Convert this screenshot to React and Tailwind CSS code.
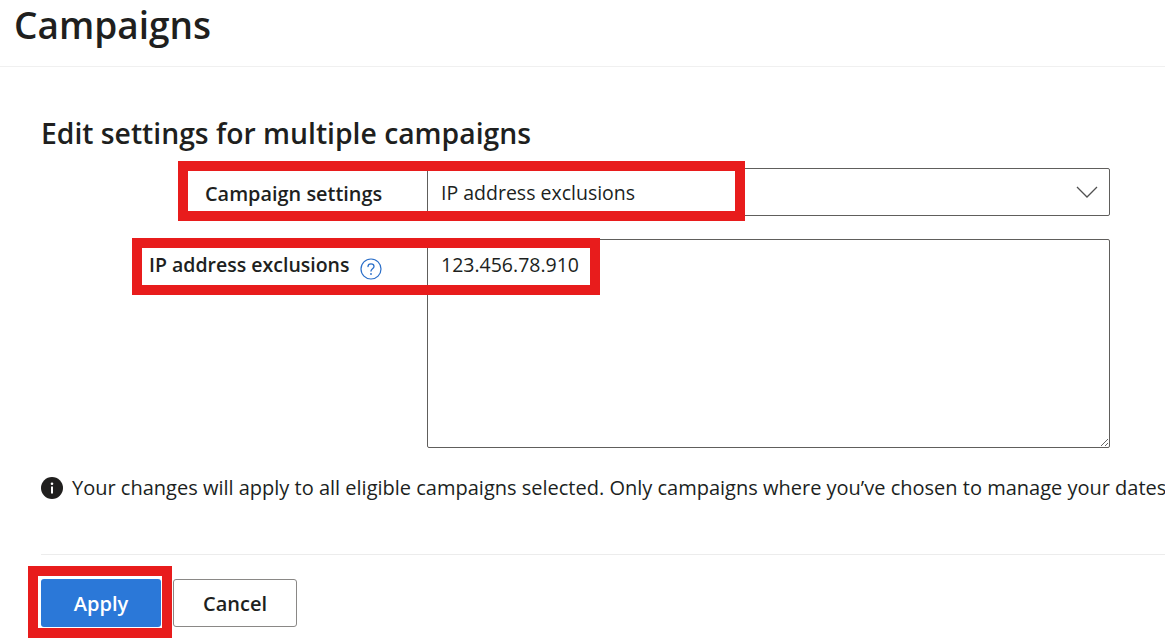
import React from 'react';

const font = { fontFamily: '"Open Sans", "Noto Sans", sans-serif' };

function HelpIcon() {
  return (
    <svg width="22" height="22" viewBox="0 0 22 22" fill="none" className="shrink-0 mt-[8px]">
      <circle cx="11" cy="11" r="10" stroke="#2b6fc9" strokeWidth="1.2" />
      <path d="M8 8.6c0-1.7 1.3-2.7 3-2.7s3 1 3 2.5c0 2.3-3 2.3-3 4.6" stroke="#2b6fc9" strokeWidth="1.3" strokeLinecap="round" />
      <circle cx="11" cy="16" r="0.9" fill="#2b6fc9" />
    </svg>
  );
}

function InfoIcon() {
  return (
    <svg width="22" height="22" viewBox="0 0 22 22" className="shrink-0">
      <circle cx="11" cy="11" r="11" fill="#201f1e" />
      <rect x="10" y="9.5" width="2" height="7" fill="#fff" />
      <circle cx="11" cy="6.8" r="1.3" fill="#fff" />
    </svg>
  );
}

function Highlight({ className }) {
  return <div className={`absolute border-[10px] border-[#e81c1c] pointer-events-none ${className}`} />;
}

export default function App() {
  return (
    <div className="relative w-[1165px] h-[639px] overflow-hidden bg-white text-[#201f1e]" style={font}>
      <header className="h-[67px] border-b border-[#f0f0f0] pl-[14px]">
        <h1 className="text-[37px] leading-[50px] font-semibold">Campaigns</h1>
      </header>

      <main className="pl-[41px]">
        <h2 className="mt-[46px] text-[28.3px] leading-[40px] font-semibold">Edit settings for multiple campaigns</h2>

        <div className="mt-[15px] flex items-center">
          <div className="w-[386px] pl-[164px] pt-1 text-[19.9px] font-semibold">Campaign settings</div>
          <div className="w-[683px] h-[48px] flex items-center justify-between border border-[#605e5c] rounded-[2px] pl-[13px] pr-[11px] pb-px text-[19.5px]">
            <span className="translate-y-px">IP address exclusions</span>
            <svg width="22" height="12" viewBox="0 0 22 12" fill="none">
              <path d="M1 1l10 10L21 1" stroke="#505050" strokeWidth="1.3" />
            </svg>
          </div>
        </div>

        <div className="mt-[23px] flex items-start">
          <div className="w-[386px] pl-[108px] pt-[11px] flex items-start gap-[10px] text-[19.5px] font-semibold">
            <span>IP address exclusions</span>
            <HelpIcon />
          </div>
          <div className="w-[683px] h-[209px] resize overflow-auto border border-[#605e5c] rounded-[2px] pl-[13px] pt-[10px] text-[19.5px]">
            123.456.78.910
          </div>
        </div>

        <div className="mt-[25px] flex items-center gap-[9px] whitespace-nowrap text-[20px]">
          <InfoIcon />
          <span>Your changes will apply to all eligible campaigns selected. Only campaigns where you’ve chosen to manage your dates</span>
        </div>

        <div className="mt-[51px] border-t border-[#ececec] pt-[24px] flex gap-[12px]">
          <button className="w-[120px] h-[48px] pt-px rounded-[3px] bg-[#2b78d8] text-white text-[20px] font-semibold">Apply</button>
          <button className="w-[124px] h-[48px] pt-px rounded-[3px] border border-[#8a8886] text-[20px] font-semibold">Cancel</button>
        </div>
      </main>

      <Highlight className="left-[178px] top-[161px] w-[567px] h-[60px]" />
      <Highlight className="left-[132px] top-[238px] w-[468px] h-[57px]" />
      <Highlight className="left-[28px] top-[566px] w-[144px] h-[72px]" />
    </div>
  );
}
